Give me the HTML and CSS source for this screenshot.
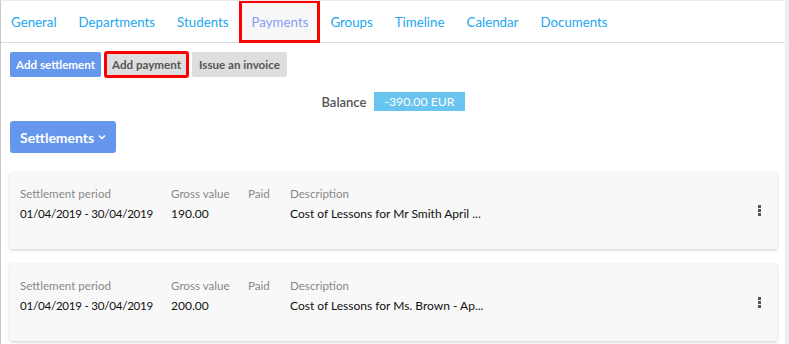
FILE: index.html
```html
<!DOCTYPE html>
<html lang="en">

<head>
    <meta charset="UTF-8">
    <title>Payments</title>
    <link rel="stylesheet" href="styles.css">
</head>

<body>
    <div class="page">
        <nav class="tabs">
            <a href="#">General</a>
            <a href="#">Departments</a>
            <a href="#">Students</a>
            <a href="#" class="active marked">Payments</a>
            <a href="#">Groups</a>
            <a href="#">Timeline</a>
            <a href="#">Calendar</a>
            <a href="#">Documents</a>
        </nav>

        <div class="actions">
            <button class="btn btn-blue">Add settlement</button>
            <button class="btn btn-grey marked">Add payment</button>
            <button class="btn btn-grey">Issue an invoice</button>
        </div>

        <div class="balance">
            <span>Balance</span>
            <span class="badge">-390.00 EUR</span>
        </div>

        <div class="dropdown">
            <button class="btn-large">Settlements
                <svg width="8" height="6" viewBox="0 0 8 6"><path d="M1 1.5 L4 4.5 L7 1.5" fill="none" stroke="#fff" stroke-width="1.5"/></svg>
            </button>
        </div>

        <!-- settlements list -->
        <div class="card">
            <div class="col col-period">
                <div class="label">Settlement period</div>
                <div class="value narrow">01/04/2019 - 30/04/2019</div>
            </div>
            <div class="col col-gross">
                <div class="label">Gross value</div>
                <div class="value">190.00</div>
            </div>
            <div class="col col-paid">
                <div class="label">Paid</div>
                <div class="value"></div>
            </div>
            <div class="col col-desc">
                <div class="label">Description</div>
                <div class="value">Cost of Lessons for Mr Smith April ...</div>
            </div>
            <div class="kebab"><i></i><i></i><i></i></div>
        </div>

        <div class="card">
            <div class="col col-period">
                <div class="label">Settlement period</div>
                <div class="value narrow">01/04/2019 - 30/04/2019</div>
            </div>
            <div class="col col-gross">
                <div class="label">Gross value</div>
                <div class="value">200.00</div>
            </div>
            <div class="col col-paid">
                <div class="label">Paid</div>
                <div class="value"></div>
            </div>
            <div class="col col-desc">
                <div class="label">Description</div>
                <div class="value">Cost of Lessons for Ms. Brown - Ap...</div>
            </div>
            <div class="kebab"><i></i><i></i><i></i></div>
        </div>
    </div>
</body>

</html>
```

FILE: styles.css
```css
* {
    margin: 0;
    padding: 0;
    box-sizing: border-box;
}

body {
    font-family: 'Lato', sans-serif;
    color: #222;
    background-color: #eceef0;
    overflow: hidden;
}

.page {
    width: 785px;
    height: 344px;
    background-color: #fff;
    border-left: 1px solid #c8c8c8;
    border-top: 1px solid #e8eaed;
    overflow: hidden;
}

.tabs {
    display: flex;
    height: 42px;
    border-bottom: 1px solid #dcdcdc;
    padding-left: 10px;
}

.tabs a {
    display: flex;
    align-items: center;
    padding: 0 11px;
    font-size: 13.3px;
    color: #22a7ee;
    text-decoration: none;
}

.tabs a:first-child {
    padding-left: 0;
}

.tabs a.active {
    background-color: #f7f7f7;
    color: #8a9cf2;
    padding: 0 11px 0 12px;
}

.marked {
    outline: 3px solid #ff0000;
    outline-offset: -2px;
}

.actions {
    display: flex;
    gap: 4px;
    padding: 9px 0 0 9px;
}

.btn {
    height: 25px;
    padding: 0 7px;
    border: none;
    border-radius: 2px;
    font-family: 'Lato', sans-serif;
    font-size: 11.6px;
    font-weight: 700;
}

.btn-blue {
    background-color: #6597ec;
    color: #fff;
    padding: 0 6px;
}

.btn-grey {
    background-color: #dedede;
    color: #555;
}

.balance {
    display: flex;
    justify-content: center;
    align-items: center;
    gap: 8px;
    margin-top: 15px;
    font-size: 13px;
    font-weight: 600;
    color: #555;
}

.badge {
    background-color: #6ac4f0;
    color: #fff;
    font-weight: 400;
    padding: 2px 10px;
    font-size: 12.3px;
}

.dropdown {
    padding: 10px 0 0 9px;
}

.btn-large {
    display: flex;
    align-items: center;
    gap: 4px;
    height: 32px;
    padding: 0 10px;
    border: none;
    border-radius: 3px;
    background-color: #6597ec;
    color: #fff;
    font-family: 'Lato', sans-serif;
    font-size: 14px;
    font-weight: 700;
}

.card {
    display: flex;
    align-items: flex-start;
    margin: 19px 8px 0 9px;
    padding: 15px 10px 0 10px;
    height: 77px;
    background-color: #f8f8f8;
    box-shadow: 0 1px 3px rgba(0, 0, 0, 0.2);
}

.card + .card {
    margin-top: 15px;
}

.label {
    font-size: 11.6px;
    color: #888;
    line-height: 14px;
}

.value {
    margin-top: 6px;
    font-size: 12px;
    color: #111;
    line-height: 14px;
}

.value.narrow {
    font-size: 11.6px;
    letter-spacing: -0.25px;
}

.col-period {
    width: 151px;
}

.col-gross {
    width: 77px;
}

.col-paid {
    width: 42px;
}

.col-desc {
    flex: 1;
}

.kebab {
    display: flex;
    flex-direction: column;
    gap: 1px;
    margin: 18px 6px 0 0;
}

.kebab i {
    width: 3px;
    height: 3px;
    background-color: #555;
}
```
